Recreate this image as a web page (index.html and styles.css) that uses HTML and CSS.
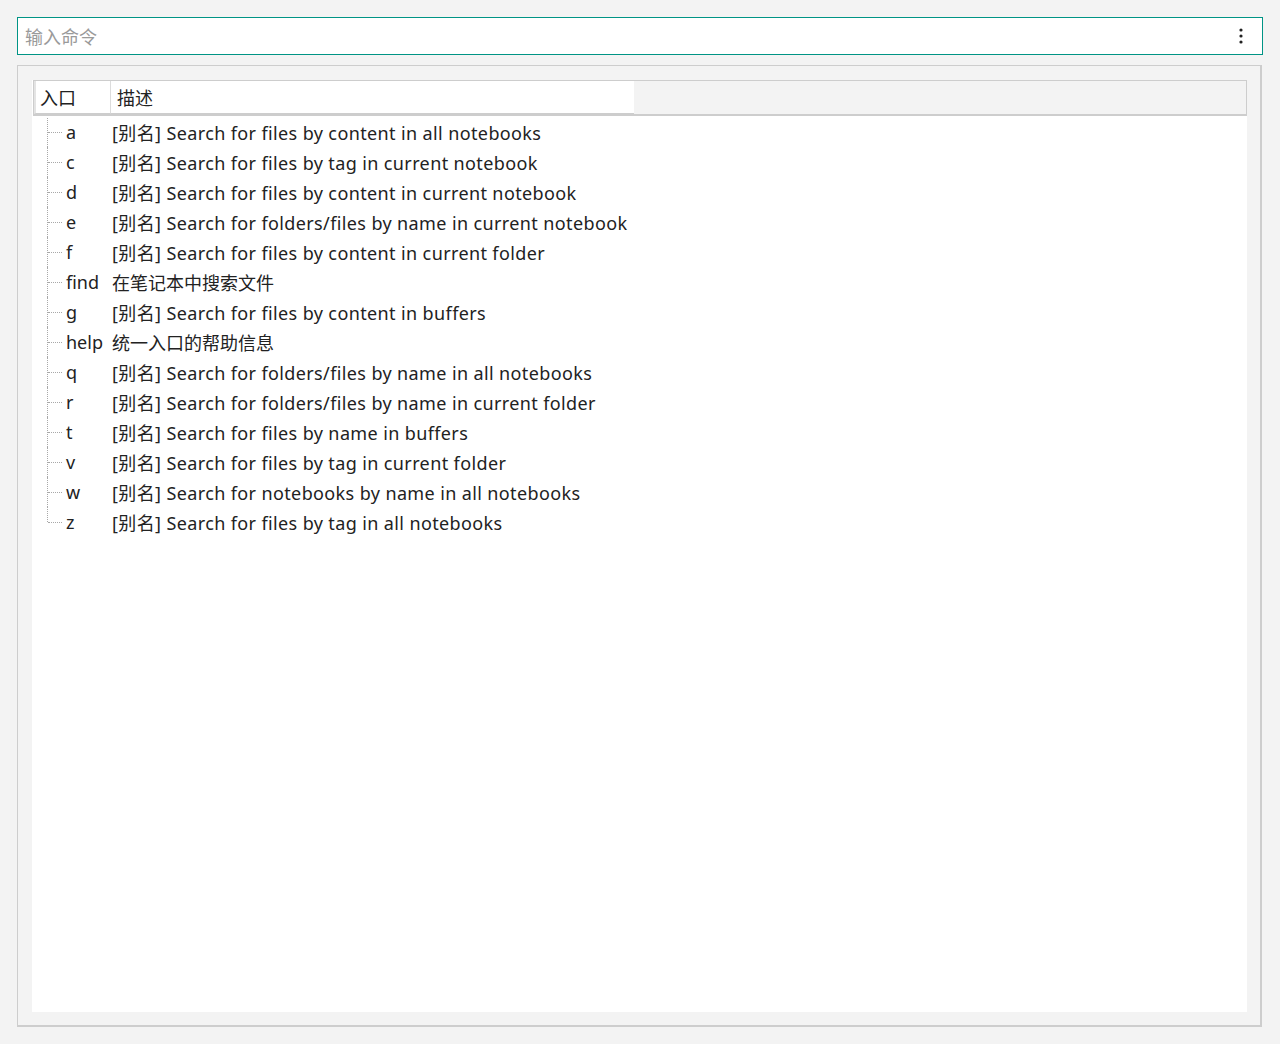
FILE: index.html
```html
<!DOCTYPE html>
<html lang="zh">
<head>
<meta charset="utf-8">
<title>命令</title>
<link rel="stylesheet" href="styles.css">
</head>
<body>
<div class="app">
  <div class="cmdbar">
    <span class="placeholder">输入命令</span>
    <span class="menu">
      <svg width="4" height="16" viewBox="0 0 4 16"><circle cx="2" cy="2" r="1.6" fill="#222"/><circle cx="2" cy="8" r="1.6" fill="#222"/><circle cx="2" cy="14" r="1.6" fill="#222"/></svg>
    </span>
  </div>
  <div class="panel">
    <div class="tree">
      <div class="header">
        <div class="hcell hc1">入口</div>
        <div class="hcell hc2">描述</div>
        <div class="hfill"></div>
      </div>
      <div class="rows">
        <div class="row"><span class="key">a</span><span class="desc">[别名] Search for files by content in all notebooks</span></div>
        <div class="row"><span class="key">c</span><span class="desc">[别名] Search for files by tag in current notebook</span></div>
        <div class="row"><span class="key">d</span><span class="desc">[别名] Search for files by content in current notebook</span></div>
        <div class="row"><span class="key">e</span><span class="desc">[别名] Search for folders/files by name in current notebook</span></div>
        <div class="row"><span class="key">f</span><span class="desc">[别名] Search for files by content in current folder</span></div>
        <div class="row"><span class="key">find</span><span class="desc cn">在笔记本中搜索文件</span></div>
        <div class="row"><span class="key">g</span><span class="desc">[别名] Search for files by content in buffers</span></div>
        <div class="row"><span class="key">help</span><span class="desc cn">统一入口的帮助信息</span></div>
        <div class="row"><span class="key">q</span><span class="desc">[别名] Search for folders/files by name in all notebooks</span></div>
        <div class="row"><span class="key">r</span><span class="desc">[别名] Search for folders/files by name in current folder</span></div>
        <div class="row"><span class="key">t</span><span class="desc">[别名] Search for files by name in buffers</span></div>
        <div class="row"><span class="key">v</span><span class="desc">[别名] Search for files by tag in current folder</span></div>
        <div class="row"><span class="key">w</span><span class="desc">[别名] Search for notebooks by name in all notebooks</span></div>
        <div class="row last"><span class="key">z</span><span class="desc">[别名] Search for files by tag in all notebooks</span></div>
      </div>
    </div>
  </div>
</div>
</body>
</html>
```

FILE: styles.css
```css
* { box-sizing: border-box; }
html, body { margin: 0; padding: 0; }
body {
  background: #f3f3f3;
  font-family: "Noto Sans", "Noto Sans CJK SC", sans-serif;
  font-size: 18px;
  color: #222;
}
.app {
  width: 1280px;
  height: 1044px;
  padding: 17px 17px 17px 17px;
  display: flex;
  flex-direction: column;
}
.cmdbar {
  height: 38px;
  width: 1246px;
  background: #fff;
  border: 1px solid #009485;
  display: flex;
  align-items: center;
  padding: 1px 0 0 7px;
}
.placeholder {
  color: #9a9a9a;
  font-family: "Noto Sans CJK SC", sans-serif;
  font-size: 18px;
  flex: 1;
  line-height: 1;
}
.menu {
  width: 4px;
  height: 16px;
  margin-right: 19px;
  display: flex;
}
.panel {
  margin-top: 10px;
  width: 1245px;
  height: 963px;
  border: 1px solid #cdcdcd;
  border-right-width: 2px;
  border-bottom-width: 2px;
  padding: 14px 13px 13px 14px;
  background: #f3f3f3;
}
.tree {
  background: #fff;
  height: 100%;
  display: flex;
  flex-direction: column;
}
.header {
  height: 36px;
  border: 1px solid #cdcdcd;
  border-bottom-width: 2px;
  display: flex;
  background: #f3f3f3;
  margin: 0 0 0 1px;
}
.hcell {
  background: #fff;
  height: 100%;
  display: flex;
  align-items: center;
  border-bottom: 1px solid #cdcdcd;
  font-family: "Noto Sans CJK SC", sans-serif;
}
.hc1 {
  width: 77px;
  padding-left: 4px;
  border-left: 2px solid #e4e4e4;
  border-right: 1px solid #dcdcdc;
}
.hc2 {
  width: 523px;
  padding-left: 6px;
}
.hfill { flex: 1; }
.rows {
  padding-top: 1px;
  padding-left: 15px;
}
.row {
  position: relative;
  height: 30px;
  display: flex;
  align-items: center;
  white-space: nowrap;
}
.row::before {
  content: "";
  position: absolute;
  left: 0;
  top: 0;
  bottom: 0;
  border-left: 1px dotted #a8a8a8;
}
.row:first-child::before { top: 1px; }
.row.last::before { bottom: 50%; }
.row::after {
  content: "";
  position: absolute;
  left: 1px;
  width: 14px;
  top: 15px;
  border-top: 1px dotted #a8a8a8;
}
.key {
  width: 46px;
  box-sizing: content-box;
  padding-left: 19px;
}
.desc {
  font-family: "Noto Sans", "Noto Sans CJK SC", sans-serif;
  letter-spacing: 0.38px;
}
.desc.cn {
  letter-spacing: 0;
}
```
